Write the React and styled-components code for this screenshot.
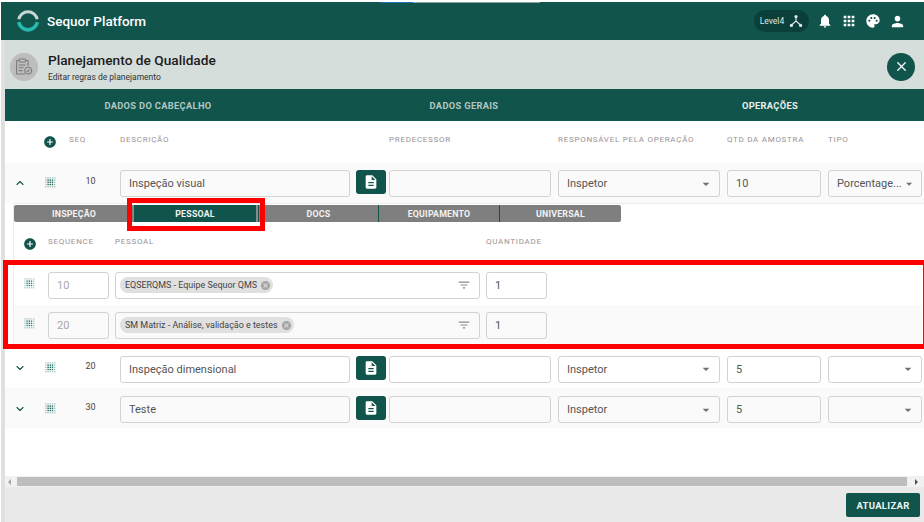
import React from "react";
import styled, { createGlobalStyle } from "styled-components";
import { X, ChevronUp, ChevronDown } from "lucide-react";
import {
  MdNotifications,
  MdApps,
  MdPalette,
  MdPerson,
  MdAddCircle,
  MdDescription,
  MdCancel,
  MdFilterList,
  MdArrowDropDown,
} from "react-icons/md";

const GREEN = "#10544c";
const OPERATION_COLUMNS = "16px 30px 41px 230px 25px 162px 162px 94px 94px";
const PERSON_COLUMNS = "61px 365px 61px";

const GlobalStyle = createGlobalStyle`
  html, body {
    margin: 0;
    padding: 0;
    background: #fff;
  }
  * {
    box-sizing: border-box;
  }
  body {
    font-family: Roboto, "Liberation Sans", sans-serif;
    color: #4a4a4a;
  }
`;

const Page = styled.div`
  width: 924px;
  height: 522px;
  overflow: hidden;
  position: relative;
  display: flex;
  flex-direction: column;
  padding-top: 2px;
  background: #fff;
`;

const LoadLine = styled.div`
  position: absolute;
  top: 2px;
  left: 380px;
  display: flex;
  height: 1px;
`;

const LoadPart = styled.div`
  width: ${(props) => props.$width}px;
  background: ${(props) => props.$color};
`;

const TopBar = styled.header`
  height: 38px;
  flex: none;
  margin-left: 1px;
  padding: 0 18px 0 15px;
  display: flex;
  align-items: center;
  background: ${GREEN};
  color: #fff;
`;

const Brand = styled.div`
  font-size: 13.5px;
  font-weight: 500;
  margin-left: 7px;
  flex: 1;
`;

const LevelPill = styled.div`
  height: 22px;
  width: 55px;
  margin-right: 8px;
  border-radius: 11px;
  background: #0b3f39;
  font-size: 8.5px;
  display: flex;
  align-items: center;
  justify-content: center;
  gap: 5px;
  color: #dfe8e6;
`;

const TopIcons = styled.div`
  display: flex;
  align-items: center;
  gap: 8px;
`;

const Body = styled.div`
  flex: 1;
  min-height: 0;
  display: flex;
  flex-direction: column;
  margin-left: 1px;
  border-left: 4px solid #e0e0e0;
`;

const TitleBar = styled.div`
  height: 49px;
  flex: none;
  display: flex;
  align-items: center;
  padding: 4px 9px 0 5px;
  background: #d5dedb;
`;

const TitleBadge = styled.div`
  width: 28px;
  height: 28px;
  border-radius: 50%;
  background: #bdbdbd;
  display: flex;
  align-items: center;
  justify-content: center;
`;

const TitleText = styled.div`
  flex: 1;
  margin-left: 10px;
  padding-top: 2px;
`;

const Heading = styled.div`
  font-size: 13.7px;
  font-weight: 500;
  line-height: 17px;
  color: #1c1c1c;
`;

const SubHeading = styled.div`
  font-size: 8.5px;
  line-height: 12px;
  margin-top: 2px;
  color: #333;
`;

const CloseButton = styled.button`
  width: 28px;
  height: 28px;
  padding: 0;
  border: 0;
  border-radius: 50%;
  background: ${GREEN};
  color: #fff;
  display: flex;
  align-items: center;
  justify-content: center;
`;

const MainTabs = styled.nav`
  height: 32px;
  flex: none;
  display: grid;
  grid-template-columns: repeat(3, 306px);
  background: ${GREEN};
`;

const MainTab = styled.div`
  display: flex;
  align-items: center;
  justify-content: center;
  font-size: 9.3px;
  font-weight: 700;
  letter-spacing: 0.33px;
  color: ${(props) => (props.$active ? "#e8f0ee" : "#b4c7c3")};
`;

const Scroller = styled.div`
  flex: 1;
  min-height: 0;
  background: #fff;
`;

const HeaderRow = styled.div`
  height: 42px;
  padding-left: 7px;
  display: grid;
  grid-template-columns: ${OPERATION_COLUMNS};
  column-gap: 7px;
  align-items: center;
`;

const OperationRow = styled.div`
  height: ${(props) => props.$height}px;
  padding: ${(props) => props.$top}px 0 0 7px;
  display: grid;
  grid-template-columns: ${OPERATION_COLUMNS};
  column-gap: 7px;
  align-items: center;
  background: ${(props) => (props.$shaded ? "#fafafa" : "#fff")};
`;

const ColumnLabel = styled.div`
  font-size: 8px;
  letter-spacing: 0.72px;
  white-space: nowrap;
  color: #9a9294;
  margin-bottom: 5px;
  margin-left: ${(props) => props.$indent || 0}px;
`;

const AddIcon = styled(MdAddCircle)`
  color: ${GREEN};
  display: block;
`;

const HeaderAdd = styled.div`
  display: flex;
  justify-content: center;
`;

const RowToggle = styled.div`
  display: flex;
  justify-content: center;
  margin-bottom: 2px;
  color: ${GREEN};
`;

const GripCell = styled.div`
  display: flex;
  justify-content: center;
  margin-bottom: 3px;
`;

const SeqNumber = styled.div`
  font-size: 9px;
  color: #444;
  text-align: center;
  padding-right: 4px;
  margin-bottom: 6px;
`;

const Field = styled.div`
  height: 27px;
  border: 1px solid #d2d2d2;
  border-radius: 3px;
  padding: 0 ${(props) => (props.$arrow ? "5px" : "8px")} 0 8px;
  display: flex;
  align-items: center;
  justify-content: space-between;
  font-size: 11px;
  color: ${(props) => (props.$muted ? "#a8a8a8" : "#555")};
  white-space: nowrap;
  overflow: hidden;
`;

const DocButton = styled.button`
  width: 30px;
  height: 24px;
  margin: 0 0 3px -1px;
  padding: 0;
  border: 0;
  border-radius: 3px;
  background: ${GREEN};
  color: #fff;
  display: flex;
  align-items: center;
  justify-content: center;
`;

const Panel = styled.section`
  margin-left: 8px;
  height: 146px;
  border-top: 1px solid #ececec;
  border-left: 1px solid #ececec;
  padding-top: 1px;
`;

const SubTabs = styled.div`
  width: 607px;
  height: 17px;
  display: grid;
  grid-template-columns: 119px 125px 120px 121px 122px;
  border-radius: 2px;
  background: #7f7f7f;
`;

const SubTab = styled.div`
  display: flex;
  align-items: center;
  justify-content: center;
  font-size: 8.8px;
  font-weight: 700;
  letter-spacing: 0.2px;
  color: #f2f2f2;
  background: ${(props) => (props.$active ? GREEN : "transparent")};
  border-left: 1px solid ${(props) => (props.$active ? "#8a8a8a" : props.$first ? "transparent" : GREEN)};
  border-right: ${(props) => (props.$active ? "2px solid #8a8a8a" : "0")};
`;

const PersonHeader = styled.div`
  height: 43px;
  display: flex;
  align-items: center;
`;

const PersonAdd = styled.div`
  width: 34px;
  padding-left: 9px;
`;

const PersonGrid = styled.div`
  display: grid;
  grid-template-columns: ${PERSON_COLUMNS};
  column-gap: 6px;
  align-items: center;
`;

const PersonRow = styled.div`
  height: 40px;
  display: flex;
  align-items: center;
  background: ${(props) => (props.$shaded ? "#fafafa" : "#fff")};
`;

const PersonGrip = styled.div`
  width: 34px;
  padding-left: 10px;
  display: flex;
  margin-bottom: 3px;
`;

const Chip = styled.span`
  height: 16px;
  margin-left: -4px;
  padding: 0 2px 0 5px;
  border-radius: 8px;
  background: #e0e0e0;
  display: inline-flex;
  align-items: center;
  gap: 3px;
  font-size: 8.95px;
  color: #444;
`;

const ChipClose = styled(MdCancel)`
  color: #a6a6a6;
`;

const ScrollTrack = styled.div`
  height: 11px;
  flex: none;
  display: flex;
  align-items: center;
  background: #f1f1f1;
  padding: 0 6px 0 3px;
`;

const ScrollArrow = styled.span`
  width: 0;
  height: 0;
  border-top: 3px solid transparent;
  border-bottom: 3px solid transparent;
  border-right: ${(props) => (props.$right ? "0" : "3px solid #a3a3a3")};
  border-left: ${(props) => (props.$right ? "3px solid #505050" : "0")};
`;

const ScrollThumb = styled.div`
  height: 9px;
  flex: 1;
  margin: 0 8px 0 6px;
  background: #bdbdbd;
`;

const Footer = styled.footer`
  height: 35px;
  flex: none;
  display: flex;
  align-items: center;
  justify-content: flex-end;
  padding: 1px 4px 0 0;
  background: #e8e9e8;
`;

const SaveButton = styled.button`
  width: 74px;
  height: 24px;
  padding: 0;
  border: 0;
  border-radius: 2px;
  background: ${GREEN};
  color: #eef4f3;
  font-family: inherit;
  font-size: 9.5px;
  font-weight: 700;
  letter-spacing: 0.3px;
`;

/* os dois destaques vermelhos ficam por cima da tela */
const Highlight = styled.div`
  position: absolute;
  left: ${(props) => props.$left}px;
  top: ${(props) => props.$top}px;
  width: ${(props) => props.$width}px;
  height: ${(props) => props.$height}px;
  border: 5px solid #fe0000;
  pointer-events: none;
`;

const Logo = () => (
  <svg width="24" height="24" viewBox="0 0 24 24" fill="none">
    <path d="M2.8 10.2A9.4 9.4 0 0 1 21.2 10.2" stroke="#c9d6d3" strokeWidth="3" />
    <path d="M2.6 13.2A9.6 9.6 0 0 0 21.4 13.2" stroke="#27b9ad" strokeWidth="3.6" />
  </svg>
);

const LevelIcon = () => (
  <svg width="14" height="14" viewBox="0 0 14 14" fill="none" stroke="#dfe8e6" strokeWidth="1.1">
    <path d="M7 3.5V7L2.6 11M7 7l4.4 4" />
    <circle cx="7" cy="2.6" r="1.6" fill="#dfe8e6" stroke="none" />
    <circle cx="2.4" cy="11.4" r="1.6" fill="#dfe8e6" stroke="none" />
    <circle cx="11.6" cy="11.4" r="1.6" fill="#dfe8e6" stroke="none" />
  </svg>
);

const ClipboardCheck = () => (
  <svg width="18" height="17" viewBox="0 0 18 17" fill="none" stroke="#7d7d7d" strokeWidth="1.1">
    <path d="M4 2.5H1.6V16H10M10.5 2.5H13V8" />
    <rect x="4.2" y="1" width="6.2" height="3" rx="0.6" />
    <path d="M3.6 7h7M3.6 9.8h5M3.6 12.6h4" />
    <circle cx="13.2" cy="12.6" r="3.4" />
    <path d="M11.8 12.6l1 1 1.8-1.9" />
  </svg>
);

const Grip = ({ color = "#1f6a5e" }) => (
  <svg width="11" height="11" viewBox="0 0 11 11" fill={color}>
    {[0, 1, 2, 3, 4].flatMap((col) =>
      [0, 1, 2, 3, 4].map((row) => (
        <rect
          key={`${col}-${row}`}
          x={col * 2.2 + 0.2}
          y={row * 2.2 + 0.2}
          width="1.4"
          height="1.4"
          opacity={col > 0 && col < 4 && row > 0 && row < 4 ? 1 : 0.35}
        />
      ))
    )}
  </svg>
);

const DropField = ({ value }) => (
  <Field $arrow>
    <span>{value}</span>
    <MdArrowDropDown size={16} color="#707070" />
  </Field>
);

const Operation = ({ seq, name, qty, tipo, open, shaded, height, top = 1 }) => (
  <OperationRow $shaded={shaded} $height={height} $top={top}>
    <RowToggle>
      {open ? <ChevronUp size={12} strokeWidth={2.2} /> : <ChevronDown size={12} strokeWidth={2.2} />}
    </RowToggle>
    <GripCell>
      <Grip />
    </GripCell>
    <SeqNumber>{seq}</SeqNumber>
    <Field>{name}</Field>
    <DocButton>
      <MdDescription size={16} />
    </DocButton>
    <Field />
    <DropField value="Inspetor" />
    <Field>{qty}</Field>
    <DropField value={tipo} />
  </OperationRow>
);

const Person = ({ seq, name, shaded }) => (
  <PersonRow $shaded={shaded}>
    <PersonGrip>
      <Grip color="#2f8577" />
    </PersonGrip>
    <PersonGrid>
      <Field $muted>{seq}</Field>
      <Field>
        <Chip>
          {name}
          <ChipClose size={11} />
        </Chip>
        <MdFilterList size={14} color="#8a8a8a" />
      </Field>
      <Field>1</Field>
    </PersonGrid>
  </PersonRow>
);

export default function App() {
  return (
    <Page>
      <GlobalStyle />
      <TopBar>
        <Logo />
        <Brand>Sequor Platform</Brand>
        <LevelPill>
          Level4
          <LevelIcon />
        </LevelPill>
        <TopIcons>
          <MdNotifications size={16} />
          <MdApps size={16} />
          <MdPalette size={16} />
          <MdPerson size={17} />
        </TopIcons>
      </TopBar>
      <LoadLine>
        <LoadPart $width={33} $color="#1e6fb5" />
        <LoadPart $width={127} $color="#8fa5a2" />
      </LoadLine>
      <Body>
        <TitleBar>
          <TitleBadge>
            <ClipboardCheck />
          </TitleBadge>
          <TitleText>
            <Heading>Planejamento de Qualidade</Heading>
            <SubHeading>Editar regras de planejamento</SubHeading>
          </TitleText>
          <CloseButton>
            <X size={15} strokeWidth={2} />
          </CloseButton>
        </TitleBar>
        <MainTabs>
          <MainTab>DADOS DO CABEÇALHO</MainTab>
          <MainTab>DADOS GERAIS</MainTab>
          <MainTab $active>OPERAÇÕES</MainTab>
        </MainTabs>
        <Scroller>
          <HeaderRow>
            <span />
            <HeaderAdd>
              <AddIcon size={14} />
            </HeaderAdd>
            <ColumnLabel $indent={-3}>SEQ</ColumnLabel>
            <ColumnLabel>DESCRIÇÃO</ColumnLabel>
            <span />
            <ColumnLabel>PREDECESSOR</ColumnLabel>
            <ColumnLabel>RESPONSÁVEL PELA OPERAÇÃO</ColumnLabel>
            <ColumnLabel>QTD DA AMOSTRA</ColumnLabel>
            <ColumnLabel>TIPO</ColumnLabel>
          </HeaderRow>
          <Operation seq="10" name="Inspeção visual" qty="10" tipo="Porcentage..." open shaded height={40} />
          <Panel>
            <SubTabs>
              <SubTab $first>INSPEÇÃO</SubTab>
              <SubTab $active>PESSOAL</SubTab>
              <SubTab>DOCS</SubTab>
              <SubTab>EQUIPAMENTO</SubTab>
              <SubTab>UNIVERSAL</SubTab>
            </SubTabs>
            <PersonHeader>
              <PersonAdd>
                <AddIcon size={14} />
              </PersonAdd>
              <PersonGrid>
                <ColumnLabel>SEQUENCE</ColumnLabel>
                <ColumnLabel>PESSOAL</ColumnLabel>
                <ColumnLabel>QUANTIDADE</ColumnLabel>
              </PersonGrid>
            </PersonHeader>
            <Person seq="10" name="EQSERQMS - Equipe Sequor QMS" />
            <Person seq="20" name="SM Matriz - Análise, validação e testes" shaded />
          </Panel>
          <Operation seq="20" name="Inspeção dimensional" qty="5" tipo="" height={39} />
          <Operation seq="30" name="Teste" qty="5" tipo="" shaded height={40} top={3} />
        </Scroller>
        <ScrollTrack>
          <ScrollArrow />
          <ScrollThumb />
          <ScrollArrow $right />
        </ScrollTrack>
        <Footer>
          <SaveButton>ATUALIZAR</SaveButton>
        </Footer>
      </Body>
      <Highlight $left={127} $top={198} $width={138} $height={33} />
      <Highlight $left={3} $top={260} $width={925} $height={89} />
    </Page>
  );
}
